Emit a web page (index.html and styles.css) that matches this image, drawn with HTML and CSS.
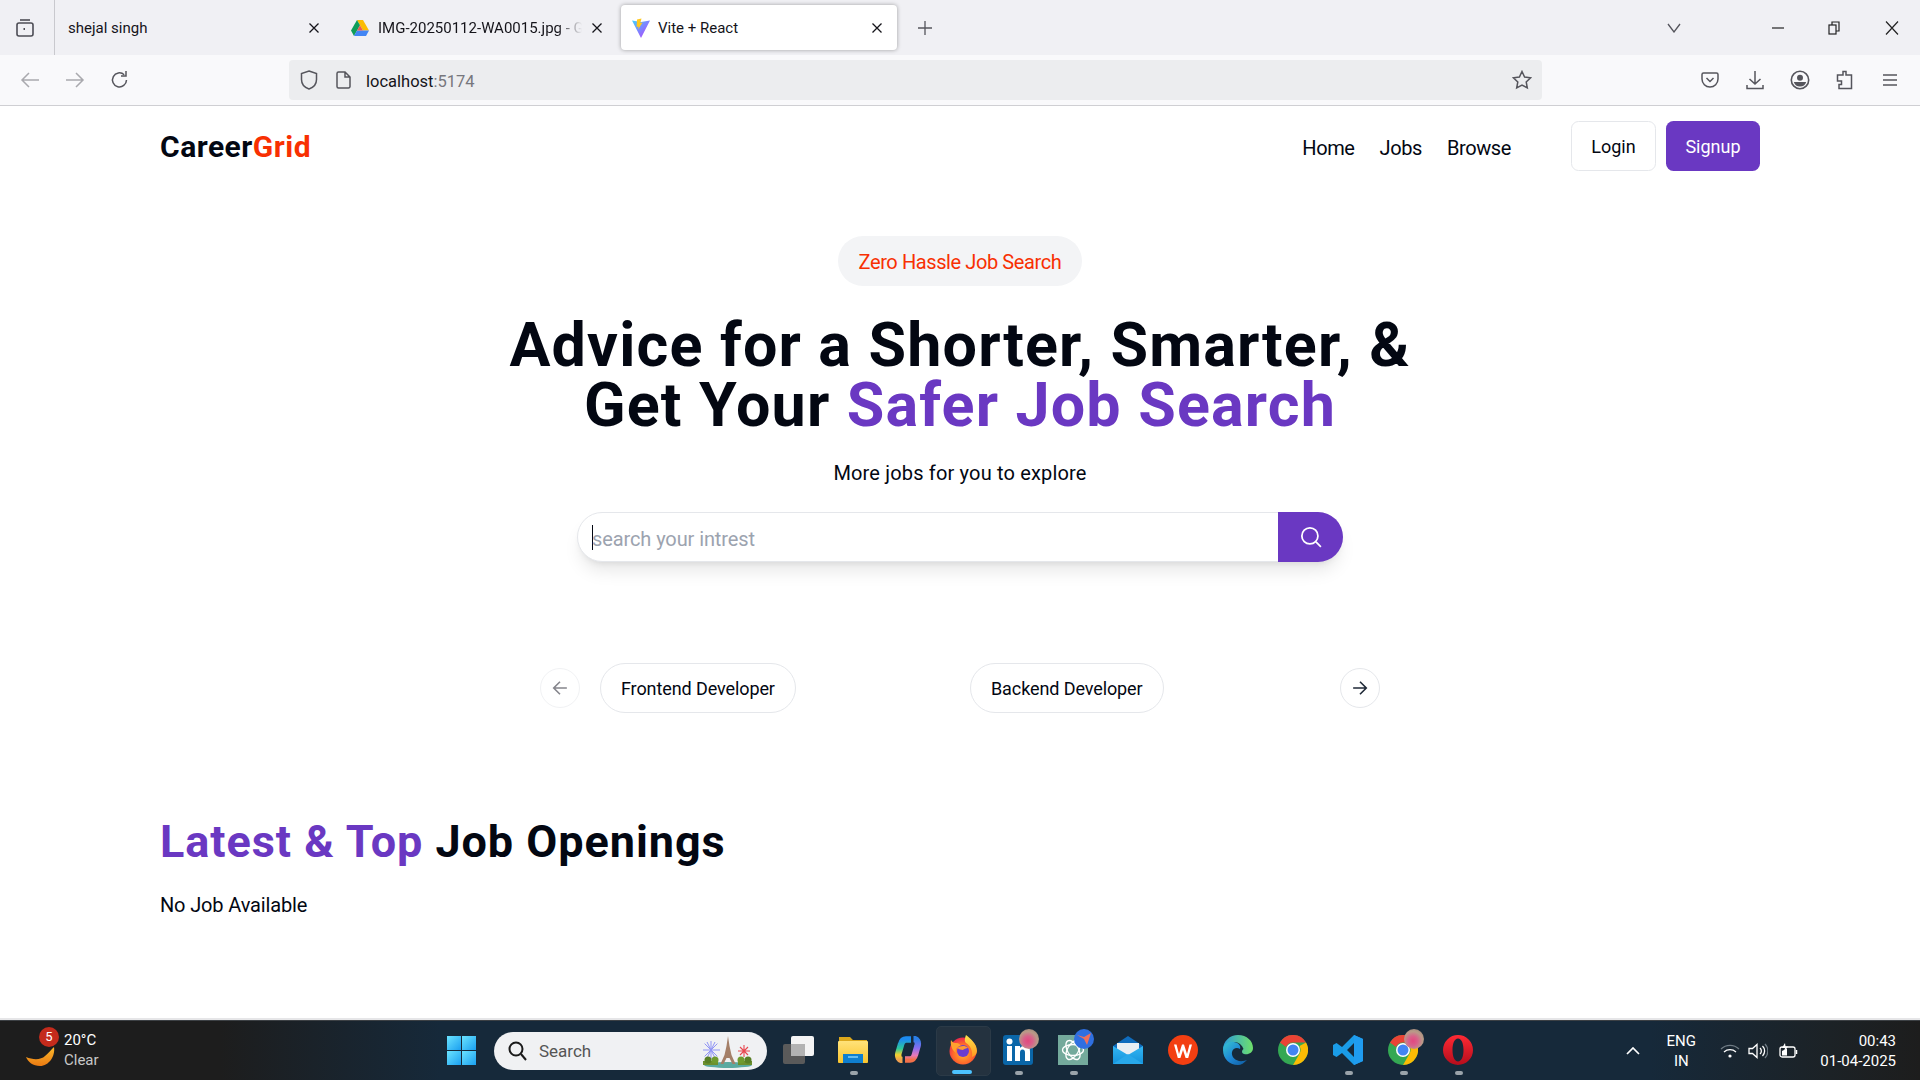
FILE: index.html
```html
<!DOCTYPE html>
<html lang="en">
<head>
<meta charset="utf-8">
<title>Vite + React</title>
<link rel="stylesheet" href="styles.css">
</head>
<body>
<svg class="defs" width="0" height="0" aria-hidden="true">
  <defs>
    <linearGradient id="gWin" x1="0" y1="0" x2="1" y2="1"><stop offset="0" stop-color="#6be4ff"/><stop offset="1" stop-color="#1a9ff0"/></linearGradient>
    <linearGradient id="gMoon" x1="0" y1="0" x2="0" y2="1"><stop offset="0" stop-color="#fbb92b"/><stop offset="1" stop-color="#ea7a12"/></linearGradient>
    <linearGradient id="gFolder" x1="0" y1="0" x2="0" y2="1"><stop offset="0" stop-color="#ffe27a"/><stop offset="1" stop-color="#fbc52d"/></linearGradient>
    <linearGradient id="gCopA" x1="0" y1="0" x2="0" y2="1"><stop offset="0" stop-color="#1c8bf0"/><stop offset=".45" stop-color="#2ec99a"/><stop offset=".75" stop-color="#f6d02f"/><stop offset="1" stop-color="#f0a050"/></linearGradient>
    <linearGradient id="gCopB" x1="0" y1="0" x2="0" y2="1"><stop offset="0" stop-color="#2a7fe8"/><stop offset=".45" stop-color="#8a6df0"/><stop offset=".8" stop-color="#e77ab8"/><stop offset="1" stop-color="#f2704a"/></linearGradient>
    <radialGradient id="gFox" cx=".5" cy=".6" r=".6"><stop offset="0" stop-color="#ffb42e"/><stop offset=".6" stop-color="#ff6a2a"/><stop offset="1" stop-color="#e9254f"/></radialGradient>
    <linearGradient id="gFlame" x1="0" y1="0" x2="0" y2="1"><stop offset="0" stop-color="#ffe14a"/><stop offset="1" stop-color="#ff9a1f"/></linearGradient>
    <linearGradient id="gMail" x1="0" y1="0" x2="0" y2="1"><stop offset="0" stop-color="#33b5f2"/><stop offset="1" stop-color="#1493dc"/></linearGradient>
    <linearGradient id="gEdge" x1="0" y1="0" x2="1" y2="1"><stop offset="0" stop-color="#37c6d0"/><stop offset=".5" stop-color="#1e88d6"/><stop offset="1" stop-color="#0f5a9e"/></linearGradient>
    <linearGradient id="gEdgeTop" x1="0" y1="0" x2="1" y2="0"><stop offset="0" stop-color="#2a9bdc"/><stop offset="1" stop-color="#6fe06a"/></linearGradient>
    <linearGradient id="gOpera" x1="0" y1="0" x2="0" y2="1"><stop offset="0" stop-color="#ff2a34"/><stop offset="1" stop-color="#b50d1c"/></linearGradient>
    <linearGradient id="gVite" x1="0" y1="0" x2="1" y2="1"><stop offset="0" stop-color="#41d1ff"/><stop offset="1" stop-color="#bd34fe"/></linearGradient>
  </defs>
</svg>

<div class="screen">
  <header class="tabbar">
    <div class="tab-manager">
      <svg width="20" height="22" viewBox="0 0 20 22" fill="none" stroke="#4d4d55" stroke-width="1.6"><rect x="2" y="6" width="16" height="13" rx="2"/><path d="M5 3h10"/><path d="M8.5 12h1.500" stroke-width="2"/></svg>
    </div>
    <div class="tab tab-plain">
      <span class="tab-title">shejal singh</span>
      <svg class="tab-x" viewBox="0 0 12 12"><path d="M1.500 1.500l9 9M10.500 1.500l-9 9"/></svg>
    </div>
    <div class="tab tab-plain tab-drive">
      <svg width="18" height="16" viewBox="0 0 18 16"><path d="M6 0h6l6 10.500h-6z" fill="#fbbc04"/><path d="M6 0l3 5.300L3 16 0 10.500z" fill="#0f9d58"/><path d="M3 16l3-5.500h12L15 16z" fill="#4285f4"/><path d="M9 5.300l3 5.200H6z" fill="#ea4335" opacity=".85"/></svg>
      <span class="tab-title tab-fade">IMG-20250112-WA0015.jpg - Google Drive</span>
      <svg class="tab-x" viewBox="0 0 12 12"><path d="M1.500 1.500l9 9M10.500 1.500l-9 9"/></svg>
    </div>
    <div class="tab tab-active">
      <svg width="18" height="20" viewBox="0 0 18 20"><path d="M0 2.500l9 1.600 9-1.600L9 20z" fill="url(#gVite)"/><path d="M9.500.5L5 1.500l-.4 7.500 2-.4-.5 3 4.500-7-2.300.4z" fill="#ffc91f"/></svg>
      <span class="tab-title">Vite + React</span>
      <svg class="tab-x" viewBox="0 0 12 12"><path d="M1.500 1.500l9 9M10.500 1.500l-9 9"/></svg>
    </div>
    <svg class="new-tab" width="16" height="16" viewBox="0 0 16 16" fill="none" stroke="#55555c" stroke-width="1.300"><path d="M8 1v14M1 8h14"/></svg>
    <div class="window-controls">
      <svg class="list-tabs" width="14" height="10" viewBox="0 0 14 10" fill="none" stroke="#55555c" stroke-width="1.300"><path d="M1 1l6 8 6-8"/></svg>
      <svg class="win-btn win-min" width="12" height="12" viewBox="0 0 12 12" fill="none" stroke="#222" stroke-width="1.200"><path d="M0 6h12"/></svg>
      <svg class="win-btn" width="12" height="14" viewBox="0 0 12 14" fill="none" stroke="#222" stroke-width="1.200"><rect x="1" y="4" width="7" height="9"/><path d="M4 4V1h7v9H8"/></svg>
      <svg class="win-btn" width="14" height="14" viewBox="0 0 14 14" fill="none" stroke="#222" stroke-width="1.200"><path d="M1 .5l12 13M13 .5L1 13.500"/></svg>
    </div>
  </header>

  <div class="toolbar">
    <div class="tool-btn tool-dim"><svg width="20" height="18" viewBox="0 0 20 18" fill="none" stroke="#a9a9ae" stroke-width="1.500"><path d="M19 9H2M9 2L2 9l7 7"/></svg></div>
    <div class="tool-btn tool-dim"><svg width="20" height="18" viewBox="0 0 20 18" fill="none" stroke="#a9a9ae" stroke-width="1.500"><path d="M1 9h17M11 2l7 7-7 7"/></svg></div>
    <div class="tool-btn"><svg width="20" height="20" viewBox="0 0 20 20" fill="none" stroke="#55555c" stroke-width="1.500"><path d="M16.500 10a7 7 0 1 1-2.300-5.300"/><path d="M16 1v5h-5" /></svg></div>
    <div class="urlbar">
      <svg class="url-shield" width="18" height="20" viewBox="0 0 18 20" fill="none" stroke="#55555c" stroke-width="1.500"><path d="M9 1l7.500 2.500v6c0 4.500-3 8-7.500 9.500-4.500-1.500-7.500-5-7.500-9.500v-6z"/></svg>
      <svg class="url-page" width="15" height="18" viewBox="0 0 15 18" fill="none" stroke="#55555c" stroke-width="1.500"><path d="M2.500 1H9l5 5v9.500a1.500 1.500 0 0 1-1.500 1.500h-10A1.500 1.500 0 0 1 1 15.500v-13A1.500 1.500 0 0 1 2.500 1zM9 1v5h5"/></svg>
      <span class="url-text">localhost<span class="url-port">:5174</span></span>
      <svg class="url-star" width="20" height="20" viewBox="0 0 20 20" fill="none" stroke="#55555c" stroke-width="1.500"><path d="M10 1.500l2.600 5.500 6 .8-4.400 4.100 1.100 6L10 15l-5.300 2.900 1.100-6L1.400 7.800l6-.8z"/></svg>
    </div>
    <div class="tool-right">
      <div class="tool-btn"><svg width="18" height="18" viewBox="0 0 18 18" fill="none" stroke="#55555c" stroke-width="1.500"><path d="M2.500 2h13A1.500 1.500 0 0 1 17 3.500V8a8 8 0 0 1-16 0V3.500A1.500 1.500 0 0 1 2.500 2z"/><path d="M5.500 7L9 10.500 12.500 7"/></svg></div>
      <div class="tool-btn"><svg width="18" height="20" viewBox="0 0 18 20" fill="none" stroke="#55555c" stroke-width="1.500"><path d="M9 1v13M3.500 9L9 14l5.500-5M1 15v3.500h16V15"/></svg></div>
      <div class="tool-btn"><svg width="20" height="20" viewBox="0 0 20 20"><circle cx="10" cy="10" r="8.700" fill="none" stroke="#55555c" stroke-width="1.600"/><circle cx="10" cy="7.700" r="3" fill="#55555c"/><path d="M3.800 12h12.400a6.500 6.500 0 0 1-12.400 0z" fill="#55555c"/></svg></div>
      <div class="tool-btn"><svg width="18" height="20" viewBox="0 0 18 20" fill="none" stroke="#55555c" stroke-width="1.500"><path d="M7 1.500h3v3.500h5.500v13.500H3v-4h2.500v-3.500H1.500V5H7z"/></svg></div>
      <div class="tool-btn"><svg width="16" height="14" viewBox="0 0 16 14" fill="none" stroke="#55555c" stroke-width="1.500"><path d="M1 2h14M1 7h14M1 12h14"/></svg></div>
    </div>
  </div>

  <main class="page">
    <nav class="nav">
      <h1 class="logo">Career<span class="red">Grid</span></h1>
      <div class="nav-right">
        <ul class="nav-links">
          <li>Home</li>
          <li>Jobs</li>
          <li>Browse</li>
        </ul>
        <div class="nav-buttons">
          <button class="btn btn-outline">Login</button>
          <button class="btn btn-primary">Signup</button>
        </div>
      </div>
    </nav>

    <section class="hero">
      <span class="hero-pill">Zero Hassle Job Search</span>
      <h2 class="hero-title">Advice for a Shorter, Smarter, &amp;<br>Get Your <span class="purple">Safer Job Search</span></h2>
      <p class="hero-sub">More jobs for you to explore</p>
      <div class="search">
        <div class="search-field"><span class="caret"></span><span class="placeholder">search your intrest</span></div>
        <button class="search-btn" aria-label="Search">
          <svg width="22" height="22" viewBox="0 0 20 20" fill="none" stroke="#fff" stroke-width="1.600"><circle cx="9" cy="9" r="7.300"/><path d="M14.500 14.500l4.500 4.500"/></svg>
        </button>
      </div>
    </section>

    <section class="carousel">
      <button class="arrow arrow-off" aria-label="Previous"><svg width="16" height="16" viewBox="0 0 14 14" fill="none" stroke="#85858c" stroke-width="1.400"><path d="M13 7H1.500M7 1.500L1.500 7 7 12.500"/></svg></button>
      <div class="carousel-items">
        <div class="carousel-item"><span class="chip">Frontend Developer</span></div>
        <div class="carousel-item"><span class="chip">Backend Developer</span></div>
      </div>
      <button class="arrow" aria-label="Next"><svg width="16" height="16" viewBox="0 0 14 14" fill="none" stroke="#1f2937" stroke-width="1.400"><path d="M1 7h11.500M7 1.500L12.500 7 7 12.500"/></svg></button>
    </section>

    <section class="latest">
      <h2 class="latest-title"><span class="purple">Latest &amp; Top</span> Job Openings</h2>
      <p class="latest-empty">No Job Available</p>
    </section>
  </main>

  <footer class="taskbar">
    <div class="weather">
      <div class="weather-icon">
        <svg width="30" height="20" viewBox="0 0 30 20"><path d="M28 0c1.500 9-5 19-14 19C7 19 2 15 0 10c7 3 15 3 19-1 3-2.500 6-6 9-9z" fill="url(#gMoon)"/></svg>
        <span class="weather-badge">5</span>
      </div>
      <div class="weather-text"><span class="temp">20°C</span><span class="cond">Clear</span></div>
    </div>
    <svg class="start" width="29" height="29" viewBox="0 0 29 29"><rect width="14" height="14" fill="url(#gWin)"/><rect x="15" width="14" height="14" fill="url(#gWin)"/><rect y="15" width="14" height="14" fill="url(#gWin)"/><rect x="15" y="15" width="14" height="14" fill="url(#gWin)"/></svg>
    <div class="task-search">
      <svg width="19" height="20" viewBox="0 0 19 20" fill="none" stroke="#1a1a1a" stroke-width="2"><circle cx="8" cy="8" r="6.500"/><path d="M13 13l5 6"/></svg>
      <span class="task-search-text">Search</span>
      <svg class="eiffel" width="50" height="32" viewBox="0 0 50 32">
        <g stroke="#8f93f5" stroke-width="1"><path d="M8 5v18M-1 14h18M1.600 7.600l12.800 12.800M14.400 7.600L1.600 20.400M4 6l8 16M12 6L4 22"/></g>
        <g stroke="#e8474f" stroke-width="1.100"><path d="M41 9v12M35 15h12M37 11l8 8M45 11l-8 8"/></g>
        <ellipse cx="25" cy="29" rx="24" ry="3" fill="#5aa9a0"/>
        <path d="M0 25h15v4H0zM35 25h14v4H35z" fill="#6d8f2e"/>
        <circle cx="5" cy="24" r="3.500" fill="#587f25"/><circle cx="12" cy="24" r="3.500" fill="#6f9a2e"/><circle cx="38" cy="24" r="3.500" fill="#6f9a2e"/><circle cx="45" cy="24" r="3.500" fill="#587f25"/>
        <path d="M25 0l1.500 10 2 9 4 9h-3l-3-6h-3l-3 6h-3l4-9 2-9z" fill="#a47f68"/>
      </svg>
    </div>
    <div class="task-icons">
      <div class="task-slot">
        <svg width="31" height="28" viewBox="0 0 31 28"><rect y="8" width="22" height="20" rx="2" fill="#5a5a5a"/><rect x="8" width="23" height="20" rx="2" fill="#f4f4f4"/><rect x="8" y="8" width="14" height="12" fill="#b3b3b3"/></svg>
      </div>
      <div class="task-slot task-pinned">
        <svg width="30" height="27" viewBox="0 0 30 27"><path d="M1 1h11l3 3h14v22H1z" fill="#dca81c"/><rect x="0" y="5" width="30" height="22" rx="1" fill="url(#gFolder)"/><path d="M5 18h20v9H5z" fill="#0f7fd0"/><path d="M10 21h10" stroke="#7fd0ff" stroke-width="1.500"/></svg>
      </div>
      <div class="task-slot">
        <svg width="28" height="27" viewBox="0 0 28 27" fill="none" stroke-width="6.500"><path d="M17 3.500h-5c-3 0-4.200 2-5 5L4.500 17c-1 4 .5 7 4 7" stroke="url(#gCopA)"/><path d="M11 23.500h5c3 0 4.200-2 5-5L23.500 10c1-4-.5-7-4-7" stroke="url(#gCopB)"/></svg>
      </div>
      <div class="task-slot task-active">
        <svg width="28" height="30" viewBox="0 0 28 30"><circle cx="14" cy="16" r="13.500" fill="url(#gFox)"/><path d="M17 0c5 4 11 9 11 16 0 3-2 5-5 6 1-6-2-12-6-14-2-2-1-5 0-8z" fill="url(#gFlame)"/><path d="M2 5c2 3 3 3 6 3 1 0 3 1 4 3-4 0-6 3-5 7C3 15 1 10 2 5z" fill="#ffa12e"/><circle cx="14" cy="16" r="6" fill="#6a3bd0"/><path d="M8 13c3-2 8-3 11 0-2 0-4 1-5 2-2 0-4-1-6-2z" fill="#ff9a2e"/></svg>
      </div>
      <div class="task-slot task-pinned">
        <svg width="30" height="30" viewBox="0 0 30 30"><rect width="30" height="30" rx="3" fill="#0a66a8"/><rect x="4" y="11" width="5" height="15" fill="#fff"/><circle cx="6.500" cy="6.500" r="3" fill="#fff"/><path d="M12 11h5v2c1-1.500 3-2.500 5-2.500 4 0 5 2.500 5 6V26h-5v-8c0-2-.5-3.500-2.500-3.500S17 16 17 18v8h-5z" fill="#fff"/></svg>
        <span class="avatar avatar-photo"></span>
      </div>
      <div class="task-slot task-pinned">
        <svg width="30" height="30" viewBox="0 0 30 30"><rect width="30" height="30" fill="#74aa9c"/><g fill="none" stroke="#fff" stroke-width="1.300"><ellipse cx="15" cy="15" rx="10.500" ry="5.500"/><ellipse cx="15" cy="15" rx="10.500" ry="5.500" transform="rotate(60 15 15)"/><ellipse cx="15" cy="15" rx="10.500" ry="5.500" transform="rotate(120 15 15)"/></g></svg>
        <span class="avatar avatar-blue"><svg width="14" height="12" viewBox="0 0 14 12"><path d="M0 2l7 2 7-4-4 12-3-6z" fill="#f0705a"/></svg></span>
      </div>
      <div class="task-slot">
        <svg width="30" height="28" viewBox="0 0 30 28"><path d="M15 0L0 10v18h30V10z" fill="#0f6cbd"/><path d="M4 7h22v8l-11 6-11-6z" fill="#e8eef3"/><path d="M0 10l15 9 15-9v18H0z" fill="url(#gMail)"/><path d="M0 28l15-10 15 10z" fill="#28a8ea"/></svg>
      </div>
      <div class="task-slot">
        <svg width="30" height="30" viewBox="0 0 30 30"><circle cx="15" cy="15" r="15" fill="#f33f12"/><path d="M6 9.500h2.500L11 19l3-9.500h2L19 19l2.500-9.500H24L20.200 23h-2.600L15 15l-2.600 8H9.800z" fill="#fff"/></svg>
      </div>
      <div class="task-slot">
        <svg width="30" height="30" viewBox="0 0 30 30"><path d="M15 0c9 0 15 6 15 13 0 5-5 7-9 6-3-.8-2-4-.5-5C19 9 13 5 7 8 3 10 1 13 0 15 0 6 7 0 15 0z" fill="url(#gEdgeTop)"/><path d="M0 15c0-6 6-9 11-8 5 1 7 4 6 7-3-2-7-1-8 3-1 5 4 10 11 9 2-.2 3-1 4-1-3 3-6 5-9 5C7 30 0 24 0 15z" fill="url(#gEdge)"/></svg>
      </div>
      <div class="task-slot">
        <svg width="30" height="30" viewBox="0 0 30 30"><circle cx="15" cy="15" r="15" fill="#34a853"/><path d="M2 7.500A15 15 0 0 1 28 7.500H15a7.500 7.500 0 0 0-7 4.500z" fill="#ea4335"/><path d="M28 7.500A15 15 0 0 1 15 30l6.500-11.300A7.500 7.500 0 0 0 21.500 11z" fill="#fbbc04"/><circle cx="15" cy="15" r="7" fill="#fff"/><circle cx="15" cy="15" r="5.500" fill="#4285f4"/></svg>
      </div>
      <div class="task-slot task-pinned">
        <svg width="30" height="30" viewBox="0 0 30 30"><path d="M21 0l9 4v22l-9 4-12-12-5.500 4L0 20v-10l3.500-2L9 12zM21 8l-7 7 7 7z" fill="#1a9ce8"/><path d="M21 0l9 4v22l-9 4z" fill="#1f9cf0"/></svg>
      </div>
      <div class="task-slot task-pinned">
        <svg width="30" height="30" viewBox="0 0 30 30"><circle cx="15" cy="15" r="15" fill="#34a853"/><path d="M2 7.500A15 15 0 0 1 28 7.500H15a7.500 7.500 0 0 0-7 4.500z" fill="#ea4335"/><path d="M28 7.500A15 15 0 0 1 15 30l6.500-11.300A7.500 7.500 0 0 0 21.500 11z" fill="#fbbc04"/><circle cx="15" cy="15" r="7" fill="#fff"/><circle cx="15" cy="15" r="5.500" fill="#4285f4"/></svg>
        <span class="avatar avatar-photo"></span>
      </div>
      <div class="task-slot task-pinned">
        <svg width="30" height="30" viewBox="0 0 30 30"><path fill-rule="evenodd" d="M15 0a15 15 0 1 1 0 30 15 15 0 0 1 0-30zm0 3.500c-3.500 0-5.500 5-5.500 11.500s2 11.500 5.500 11.500 5.500-5 5.500-11.500S18.500 3.500 15 3.500z" fill="url(#gOpera)"/></svg>
      </div>
    </div>
    <div class="tray">
      <svg class="tray-chevron" width="14" height="8" viewBox="0 0 14 8" fill="none" stroke="#fff" stroke-width="1.700"><path d="M1 7l6-6 6 6"/></svg>
      <div class="tray-lang"><span>ENG</span><span>IN</span></div>
      <svg class="tray-wifi" width="20" height="14" viewBox="0 0 20 14" fill="none"><path d="M1 5a13 13 0 0 1 18 0" stroke="#6f7b84" stroke-width="1.300"/><path d="M4 8a9 9 0 0 1 12 0" stroke="#fff" stroke-width="1.300"/><circle cx="10" cy="12" r="1.600" fill="#fff"/></svg>
      <svg class="tray-sound" width="20" height="16" viewBox="0 0 20 16" fill="none" stroke="#fff" stroke-width="1.300"><path d="M1 5.500h3.500L9 1.500v13l-4.500-4H1z"/><path d="M12 5a4 4 0 0 1 0 6M14.500 3a7 7 0 0 1 0 10"/><path d="M17 1a10 10 0 0 1 0 14" stroke="#6f7b84"/></svg>
      <svg class="tray-battery" width="20" height="16" viewBox="0 0 20 16" fill="none"><rect x="1" y="4" width="15" height="10" rx="2" stroke="#fff" stroke-width="1.300"/><path d="M17.500 7v4" stroke="#fff" stroke-width="1.500"/><path d="M3 12.500V8l5-2.500v7z" fill="#fff"/><path d="M6 0L3 5h3L5 9l4-5.500H6.500z" fill="#fff"/></svg>
      <div class="tray-clock"><span>00:43</span><span>01-04-2025</span></div>
    </div>
  </footer>
</div>
</body>
</html>
```

FILE: styles.css
```css
* { box-sizing: border-box; }
html, body { margin: 0; padding: 0; height: 100%; }
body { font-family: Roboto, "Noto Sans", sans-serif; overflow: hidden; background: #fff; }
.defs { position: absolute; }
.screen { width: 1920px; height: 1080px; display: flex; flex-direction: column; }

/* Browser tab strip */
.tabbar { height: 55px; flex: none; display: flex; background: #f0f0f4; font-size: 15px; color: #15141a; }
.tab-manager { width: 55px; height: 55px; border-right: 1px solid #c9c9ce; display: flex; align-items: center; justify-content: center; padding-right: 5px; }
.tab { width: 276px; height: 45px; margin-top: 5px; display: flex; align-items: center; flex: none; border-radius: 4px; }
.tab-plain { padding: 0 11px 0 13px; }
.tab-drive { margin-left: 7px; padding-left: 13px; gap: 9px; }
.tab-active { margin-left: 7px; background: #fff; box-shadow: 0 0 4px rgba(0,0,0,.35); padding: 0 14px 0 11px; gap: 8px; }
.tab-title { flex: 1; min-width: 0; padding-top: 1px; white-space: nowrap; overflow: hidden; }
.tab-fade { mask-image: linear-gradient(90deg, #000 88%, transparent); -webkit-mask-image: linear-gradient(90deg, #000 88%, transparent); }
.tab-x { width: 12px; height: 12px; flex: none; fill: none; stroke: #15141a; stroke-width: 1.300; }
.new-tab { align-self: center; margin-left: 20px; flex: none; }
.window-controls { margin-left: auto; display: flex; align-items: center; height: 55px; padding-right: 21px; }
.list-tabs { margin-right: 91px; }
.win-btn + .win-btn { margin-left: 45px; }
.win-min { margin-right: -1px; }

/* Toolbar */
.toolbar { height: 51px; flex: none; display: flex; align-items: center; padding: 0 7.500px 1px; background: #f9f9fb; border-bottom: 1px solid #cfcfd3; }
.tool-btn { width: 45px; height: 40px; display: flex; align-items: center; justify-content: center; flex: none; }
.urlbar { width: 1253px; height: 40px; margin-left: 146.500px; background: #ecedef; border-radius: 4px; display: flex; align-items: center; padding-left: 11px; flex: none; }
.url-page { margin-left: 18px; }
.url-text { margin-left: 15px; padding-top: 3px; font-size: 16.500px; color: #15141a; }
.url-port { color: #77777d; }
.url-star { margin-left: auto; margin-right: 10px; }
.tool-right { margin-left: auto; display: flex; }

/* Page */
.page { flex: 1; min-height: 0; background: #fff; color: #030712; border-bottom: 2px solid #e6e6e8; display: flex; flex-direction: column; }
.nav { width: 1600px; margin: 15px auto 0; height: 50px; flex: none; display: flex; justify-content: space-between; align-items: center; }
.logo { margin: 0; font-size: 30px; font-weight: 700; letter-spacing: .5px; }
.red { color: #f83002; }
.purple { color: #6a38c2; }
.nav-right { display: flex; align-items: center; gap: 60px; }
.nav-links { list-style: none; display: flex; gap: 25px; margin: 0; padding: 3px 0 0; font-size: 20px; font-weight: 400; letter-spacing: -.4px; }
.nav-buttons { display: flex; gap: 10px; }
.btn { height: 50px; padding-top: 2px; border-radius: 7.500px; font: inherit; font-size: 18px; font-weight: 400; cursor: pointer; }
.btn-outline { width: 85px; background: #fff; border: 1px solid #e5e7eb; color: #030712; }
.btn-primary { width: 94px; background: #6a38c2; border: 0; color: #fff; }

.hero { display: flex; flex-direction: column; align-items: center; margin-top: 65px; }
.hero-pill { height: 50px; width: 244px; padding-top: 1px; border-radius: 25px; background: #f3f4f6; color: #f83002; font-size: 20px; font-weight: 400; letter-spacing: -.4px; display: flex; align-items: center; justify-content: center; }
.hero-title { margin: 29px 0 0; font-size: 61px; line-height: 60px; font-weight: 700; letter-spacing: 1.170px; text-align: center; }
.hero-sub { margin: 26px 0 0; font-size: 20px; line-height: 25px; letter-spacing: .17px; }
.search { margin-top: 26px; width: 766px; height: 50px; display: flex; border-radius: 25px; border: 1px solid #e5e7eb; box-shadow: 0 12px 18px -4px rgba(0,0,0,.1), 0 4px 7px -4px rgba(0,0,0,.1); background: #fff; }
.search-field { flex: 1; display: flex; align-items: center; padding: 3px 0 0 14px; font-size: 20px; letter-spacing: -.1px; color: #9ca3af; }
.caret { width: 1px; height: 25px; margin-top: -3px; background: #030712; margin-right: -1px; flex: none; }
.search-btn { width: 65px; margin: -1px; border: 0; border-radius: 0 25px 25px 0; background: #6a38c2; display: flex; align-items: center; justify-content: center; }

.carousel { margin: 101px 0 0 540px; width: 840px; display: flex; align-items: center; }
.arrow { width: 40px; height: 40px; border-radius: 50%; background: #fff; border: 1px solid #e5e7eb; display: flex; align-items: center; justify-content: center; padding: 0; flex: none; }
.arrow-off { border-color: #f1f2f4; }
.carousel-items { flex: 1; display: flex; padding-left: 20px; }
.carousel-item { width: 370px; flex: none; }
.chip { display: inline-flex; align-items: center; height: 50px; padding: 1px 20px 0; border: 1px solid #e5e7eb; border-radius: 25px; font-size: 18px; letter-spacing: -.1px; }

.latest { width: 1600px; margin: 104px auto 0; }
.latest-title { margin: 0; font-size: 45px; line-height: 50px; font-weight: 700; letter-spacing: .95px; }
.latest-empty { margin: 26px 0 0; font-size: 20px; line-height: 25px; letter-spacing: -.15px; }

/* Windows taskbar */
.taskbar { height: 60px; flex: none; display: flex; align-items: center; color: #fff; border-top: 1px solid #3c4044; background: linear-gradient(90deg, #1d1d1d 0, #1d1d1d 220px, #16293a 440px, #16293a 1650px, #1c2226 1830px, #1d1d1d 1920px); }
.weather { width: 447px; flex: none; display: flex; align-items: center; padding-left: 26px; }
.weather-icon { position: relative; width: 30px; height: 20px; margin-top: 12px; }
.weather-icon svg { display: block; }
.weather-badge { position: absolute; left: 13px; top: -20px; width: 20px; height: 20px; border-radius: 50%; background: #c42b1c; font-size: 13px; display: flex; align-items: center; justify-content: center; }
.weather-text { display: flex; flex-direction: column; margin: -2px 0 0 8px; font-size: 15px; line-height: 20px; }
.cond { color: #c8c8c8; }
.start { flex: none; }
.task-search { width: 273px; height: 38px; margin-left: 18px; border-radius: 19px; background: #f0f1f3; display: flex; align-items: center; padding-left: 14px; flex: none; }
.task-search-text { margin-left: 12px; font-size: 17px; color: #555; }
.eiffel { margin-left: auto; margin-right: 14px; margin-top: 2px; }
.task-icons { display: flex; margin-left: 3.500px; flex: none; height: 100%; align-items: center; }
.task-slot { width: 55px; height: 50px; position: relative; display: flex; align-items: center; justify-content: center; padding-bottom: 2px; }
.task-pinned::after { content: ""; position: absolute; left: 24px; bottom: 1px; width: 8px; height: 4px; border-radius: 2px; background: #9aa3aa; }
.task-active { background: #24323f; border-radius: 5px; border: 1px solid #2b3a47; }
.task-active::after { content: ""; position: absolute; left: 15px; bottom: 1px; width: 20px; height: 4px; border-radius: 2px; background: #4cc2ff; }
.avatar { position: absolute; left: 28.500px; top: 3.500px; width: 20px; height: 20px; border-radius: 50%; display: flex; align-items: center; justify-content: center; }
.avatar-photo { background: radial-gradient(circle at 45% 60%, #e2487e 0, #d9608a 28%, #b99a88 58%, #8a7a70 100%); }
.avatar-blue { background: #2f6fe0; }
.tray { margin-left: auto; display: flex; align-items: center; font-size: 15px; line-height: 20px; padding-right: 24px; }
.tray-chevron { margin-right: 24px; }
.tray-lang { display: flex; flex-direction: column; align-items: center; width: 34px; }
.tray-wifi { margin-left: 22px; }
.tray-sound { margin-left: 8px; }
.tray-battery { margin-left: 11px; }
.tray-clock { display: flex; flex-direction: column; align-items: flex-end; margin-left: 21px; }
```
